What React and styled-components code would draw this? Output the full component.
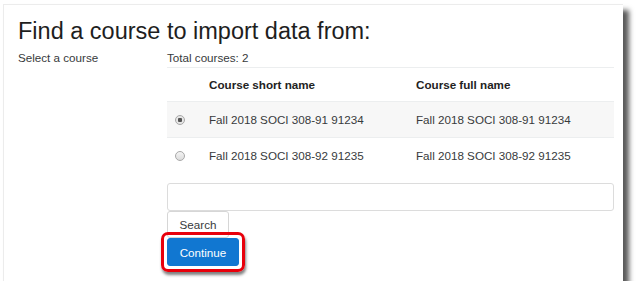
import React, { useState } from "react";
import styled, { createGlobalStyle } from "styled-components";

const GlobalStyle = createGlobalStyle`
  body {
    margin: 0;
    background: #fff;
    font-family: "Liberation Sans", Arial, sans-serif;
  }
`;

const courses = [
  { id: 1, short: "Fall 2018 SOCI 308-91 91234", full: "Fall 2018 SOCI 308-91 91234" },
  { id: 2, short: "Fall 2018 SOCI 308-92 91235", full: "Fall 2018 SOCI 308-92 91235" },
];

function App() {
  const [selected, setSelected] = useState(1);
  const [query, setQuery] = useState("");

  return (
    <>
      <GlobalStyle />
      <Panel>
        <Title>Find a course to import data from:</Title>
        <FormRow>
          <Label>Select a course</Label>
          <Field>
            <Total>Total courses: 2</Total>
            <Table>
              <colgroup>
                <col style={{ width: 32 }} />
                <col style={{ width: 207 }} />
                <col />
              </colgroup>
              <thead>
                <tr>
                  <Th />
                  <Th>Course short name</Th>
                  <Th>Course full name</Th>
                </tr>
              </thead>
              <tbody>
                {courses.map((c, i) => (
                  <Row key={c.id} $striped={i % 2 === 0} onClick={() => setSelected(c.id)}>
                    <Td><Radio $checked={selected === c.id} /></Td>
                    <Td>{c.short}</Td>
                    <Td>{c.full}</Td>
                  </Row>
                ))}
              </tbody>
            </Table>
            <SearchInput value={query} onChange={(e) => setQuery(e.target.value)} />
            <SearchButton>Search</SearchButton>
            <Highlight>
              <PrimaryButton>Continue</PrimaryButton>
            </Highlight>
          </Field>
        </FormRow>
      </Panel>
    </>
  );
}

export default App;

const Panel = styled.div`
  box-sizing: border-box;
  margin: 4px 0 0 3px;
  width: 620px;
  height: 277px;
  padding: 12px 0 0 14px;
  background: #fff;
  border-top: 1px solid #ececec;
  border-left: 1px solid #ececec;
  box-shadow: 6px 6px 5px rgba(0, 0, 0, 0.65);
`;

const Title = styled.h2`
  margin: 0;
  font-size: 23.5px;
  font-weight: 400;
  line-height: 28px;
  color: #1e1e1e;
`;

const FormRow = styled.div`
  display: grid;
  grid-template-columns: 149px 447px;
  margin-top: 4px;
  font-size: 11.65px;
  color: #373a3c;
`;

const Label = styled.div`
  line-height: 17px;
`;

const Field = styled.div`
  display: flex;
  flex-direction: column;
  align-items: flex-start;
`;

const Total = styled.div`
  line-height: 17px;
  margin-bottom: 1px;
`;

const Table = styled.table`
  width: 447px;
  border-collapse: collapse;
  table-layout: fixed;
`;

const Th = styled.th`
  padding: 8px 10px;
  line-height: 17px;
  text-align: left;
  font-weight: 700;
  color: #222;
  border-top: 1px solid #eceeef;
  border-bottom: 1px solid #eceeef;
`;

const Row = styled.tr`
  background: ${(p) => (p.$striped ? "#f7f7f7" : "#fff")};
`;

const Td = styled.td`
  padding: 9px 10px;
  line-height: 17px;
  border-top: 1px solid #eceeef;
  white-space: nowrap;
`;

const Radio = styled.span`
  display: inline-block;
  box-sizing: border-box;
  width: 10px;
  height: 10px;
  margin-left: -2px;
  vertical-align: -1px;
  border-radius: 50%;
  border: 1px solid #a9a9a9;
  background: ${(p) =>
    p.$checked
      ? "radial-gradient(circle, #555 0 2px, #e6e6e6 2.5px)"
      : "linear-gradient(#f4f4f4, #dcdcdc)"};
`;

const SearchInput = styled.input`
  box-sizing: border-box;
  margin-top: 10px;
  width: 447px;
  height: 28px;
  border: 1px solid #dcdcdc;
  border-radius: 3px;
  outline: none;
`;

const SearchButton = styled.button`
  box-sizing: border-box;
  margin-top: 0;
  width: 62px;
  height: 27px;
  padding: 0;
  background: #fff;
  border: 1px solid #d6d6d6;
  border-radius: 3px;
  font-family: inherit;
  font-size: 11.65px;
  color: #373a3c;
`;

const Highlight = styled.div`
  position: relative;
  &::after {
    content: "";
    position: absolute;
    left: -6px;
    right: -6px;
    top: -6px;
    bottom: -6px;
    border: 3px solid #e8000b;
    border-radius: 7px;
    box-shadow: 1px 3px 3px rgba(0, 0, 0, 0.5);
    pointer-events: none;
  }
`;

const PrimaryButton = styled.button`
  display: block;
  box-sizing: border-box;
  width: 72px;
  height: 28px;
  padding: 0;
  background: #1177d1;
  border: 1px solid #1177d1;
  border-radius: 3px;
  font-family: inherit;
  font-size: 11.65px;
  color: #fff;
`;
